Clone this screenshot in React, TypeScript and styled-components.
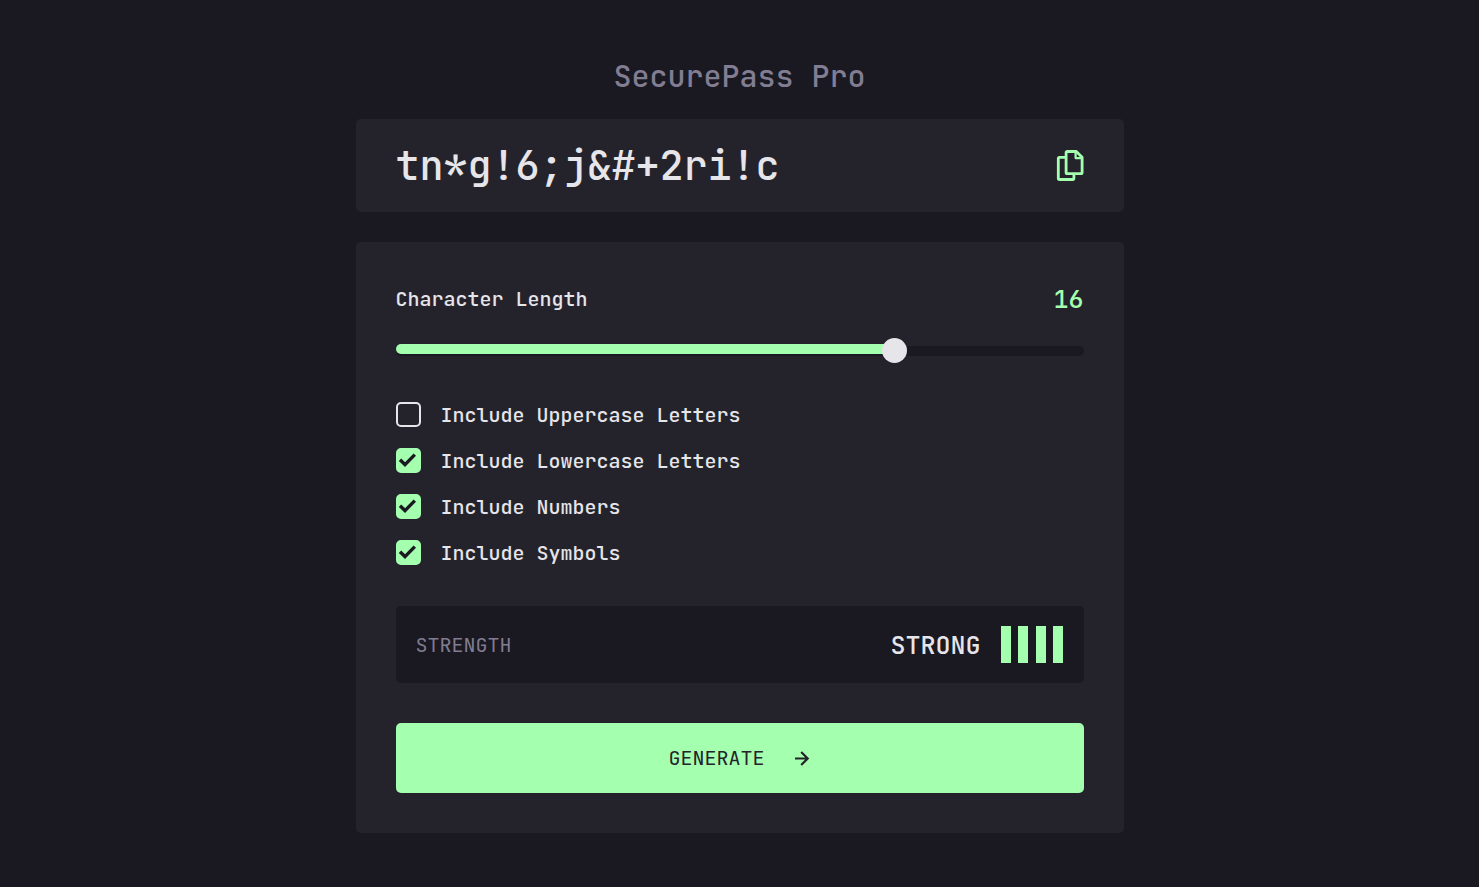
import React, { useState } from "react";
import styled, { createGlobalStyle } from "styled-components";

const color = {
  page: "#1a1820",
  panel: "#24232b",
  text: "#e6e5ea",
  muted: "#817d92",
  accent: "#a4ffaf",
};

const GlobalStyle = createGlobalStyle`
  *, *::before, *::after { box-sizing: border-box; }
  body {
    margin: 0;
    background: ${color.page};
    color: ${color.text};
    font-family: "JetBrains Mono", "DejaVu Sans Mono", monospace;
    font-size: 20px;
    font-weight: 500;
    line-height: 26px;
  }
  button, input, output { font: inherit; }
`;

const Page = styled.main`
  width: 100%;
  max-width: 768px;
  margin: 0 auto;
  padding: 56px 0 54px;
`;

const Title = styled.h1`
  margin: 0 0 23px;
  color: ${color.muted};
  font-size: 30px;
  font-weight: 500;
  line-height: 40px;
  text-align: center;
`;

const Panel = styled.section`
  background: ${color.panel};
  border-radius: 5px;
  padding: 40px;
`;

const PasswordPanel = styled(Panel)`
  display: flex;
  align-items: center;
  justify-content: space-between;
  margin-bottom: 30px;
  padding: 20px 40px;
`;

const Password = styled.output`
  font-size: 40px;
  line-height: 53px;
`;

const IconButton = styled.button`
  display: flex;
  padding: 0;
  border: 0;
  background: none;
  color: ${color.accent};
  cursor: pointer;
`;

const LengthRow = styled.div`
  display: flex;
  align-items: center;
  justify-content: space-between;
  margin-bottom: 22px;
`;

const LengthValue = styled.output`
  color: ${color.accent};
  font-size: 25px;
  line-height: 34px;
`;

const Slider = styled.div`
  position: relative;
  height: 25px;
  margin-bottom: 39px;

  &::before {
    content: "";
    position: absolute;
    inset: 8px 0 auto;
    height: 10px;
    border-radius: 5px;
    background: ${color.page};
  }
`;

const SliderFill = styled.div`
  position: absolute;
  top: 6px;
  left: 0;
  height: 10px;
  border-radius: 5px;
  background: ${color.accent};
`;

const Range = styled.input`
  position: relative;
  display: block;
  width: 100%;
  height: 25px;
  margin: 0;
  appearance: none;
  background: transparent;
  cursor: pointer;

  &::-webkit-slider-thumb {
    appearance: none;
    width: 25px;
    height: 25px;
    border-radius: 50%;
    background: ${color.text};
  }
`;

const Options = styled.div`
  display: grid;
  gap: 20px;
  margin-bottom: 40px;
`;

const Option = styled.label`
  display: flex;
  align-items: center;
  gap: 20px;
  cursor: pointer;
`;

const CheckBox = styled.span`
  display: grid;
  height: 26px;

  > * { grid-area: 1 / 1; }
  > svg { pointer-events: none; }
  > input:not(:checked) + svg { visibility: hidden; }
`;

const CheckInput = styled.input`
  appearance: none;
  width: 25px;
  height: 25px;
  margin: 0;
  border: 2px solid ${color.text};
  border-radius: 5px;
  cursor: pointer;

  &:checked {
    border-color: ${color.accent};
    background: ${color.accent};
  }
`;

const Strength = styled.div`
  display: flex;
  align-items: center;
  gap: 20px;
  margin-bottom: 40px;
  padding: 20px;
  border-radius: 5px;
  background: ${color.page};
`;

const StrengthLabel = styled.span`
  flex: 1;
  color: ${color.muted};
  font-weight: 400;
`;

const StrengthValue = styled.span`
  font-size: 25px;
  line-height: 34px;
`;

const Bars = styled.div`
  display: flex;
  justify-content: space-between;
  width: 63px;
  height: 37px;
`;

const Bar = styled.span`
  width: 10px;
  background: ${color.accent};
`;

const GenerateButton = styled.button`
  display: flex;
  align-items: center;
  justify-content: center;
  gap: 28px;
  width: 100%;
  height: 70px;
  padding: 0;
  border: 0;
  border-radius: 5px;
  background: ${color.accent};
  color: ${color.panel};
  font-weight: 400;
  cursor: pointer;
`;

const CopyIcon = () => (
  <svg width="28" height="31" viewBox="0 0 28 31" fill="none" stroke="currentColor" strokeWidth="2.8" strokeLinejoin="round" aria-hidden="true">
    <path d="M9.5 7.4H3.5a1.2 1.2 0 0 0-1.2 1.2v19.7a1.2 1.2 0 0 0 1.2 1.2h13.2a1.2 1.2 0 0 0 1.2-1.2v-4" />
    <path d="M11.3 1.5h9l5.8 5.8v15.2a1.2 1.2 0 0 1-1.2 1.2H11.3a1.2 1.2 0 0 1-1.2-1.2V2.7a1.2 1.2 0 0 1 1.2-1.2z" />
    <path d="M19.6 1.5v6.6h6.5" strokeWidth="2.2" />
  </svg>
);

const CheckIcon = () => (
  <svg width="25" height="25" viewBox="0 0 25 25" fill="none" stroke={color.page} strokeWidth="3.4" aria-hidden="true">
    <path d="M4 11.8l5 4.8L18.8 6.6" />
  </svg>
);

const ArrowIcon = () => (
  <svg width="18" height="18" viewBox="0 0 18 18" fill="none" stroke="currentColor" strokeWidth="2.2" aria-hidden="true">
    <path d="M2 9.5h12.5M8.2 3L14.7 9.5 8.2 16" />
  </svg>
);

const MIN = 5;
const MAX = 20;
const options = [
  "Include Uppercase Letters",
  "Include Lowercase Letters",
  "Include Numbers",
  "Include Symbols",
];

export default function App() {
  const [length, setLength] = useState(16);

  return (
    <>
      <GlobalStyle />
      <Page>
        <Title>SecurePass Pro</Title>
        <PasswordPanel>
          <Password>{"tn*g!6;j&#+2ri!c"}</Password>
          <IconButton type="button" aria-label="Copy password">
            <CopyIcon />
          </IconButton>
        </PasswordPanel>
        <Panel>
          <LengthRow>
            <label htmlFor="length">Character Length</label>
            <LengthValue htmlFor="length">{length}</LengthValue>
          </LengthRow>
          <Slider>
            <SliderFill style={{ width: `${((length - MIN) / (MAX - MIN)) * 100}%` }} />
            <Range
              id="length"
              type="range"
              min={MIN}
              max={MAX}
              value={length}
              onChange={(e) => setLength(Number(e.target.value))}
            />
          </Slider>
          <Options>
            {options.map((label, i) => (
              <Option key={label}>
                <CheckBox>
                  <CheckInput type="checkbox" defaultChecked={i > 0} />
                  <CheckIcon />
                </CheckBox>
                {label}
              </Option>
            ))}
          </Options>
          <Strength>
            <StrengthLabel>STRENGTH</StrengthLabel>
            <StrengthValue>STRONG</StrengthValue>
            <Bars>
              <Bar />
              <Bar />
              <Bar />
              <Bar />
            </Bars>
          </Strength>
          <GenerateButton type="button">
            GENERATE
            <ArrowIcon />
          </GenerateButton>
        </Panel>
      </Page>
    </>
  );
}
